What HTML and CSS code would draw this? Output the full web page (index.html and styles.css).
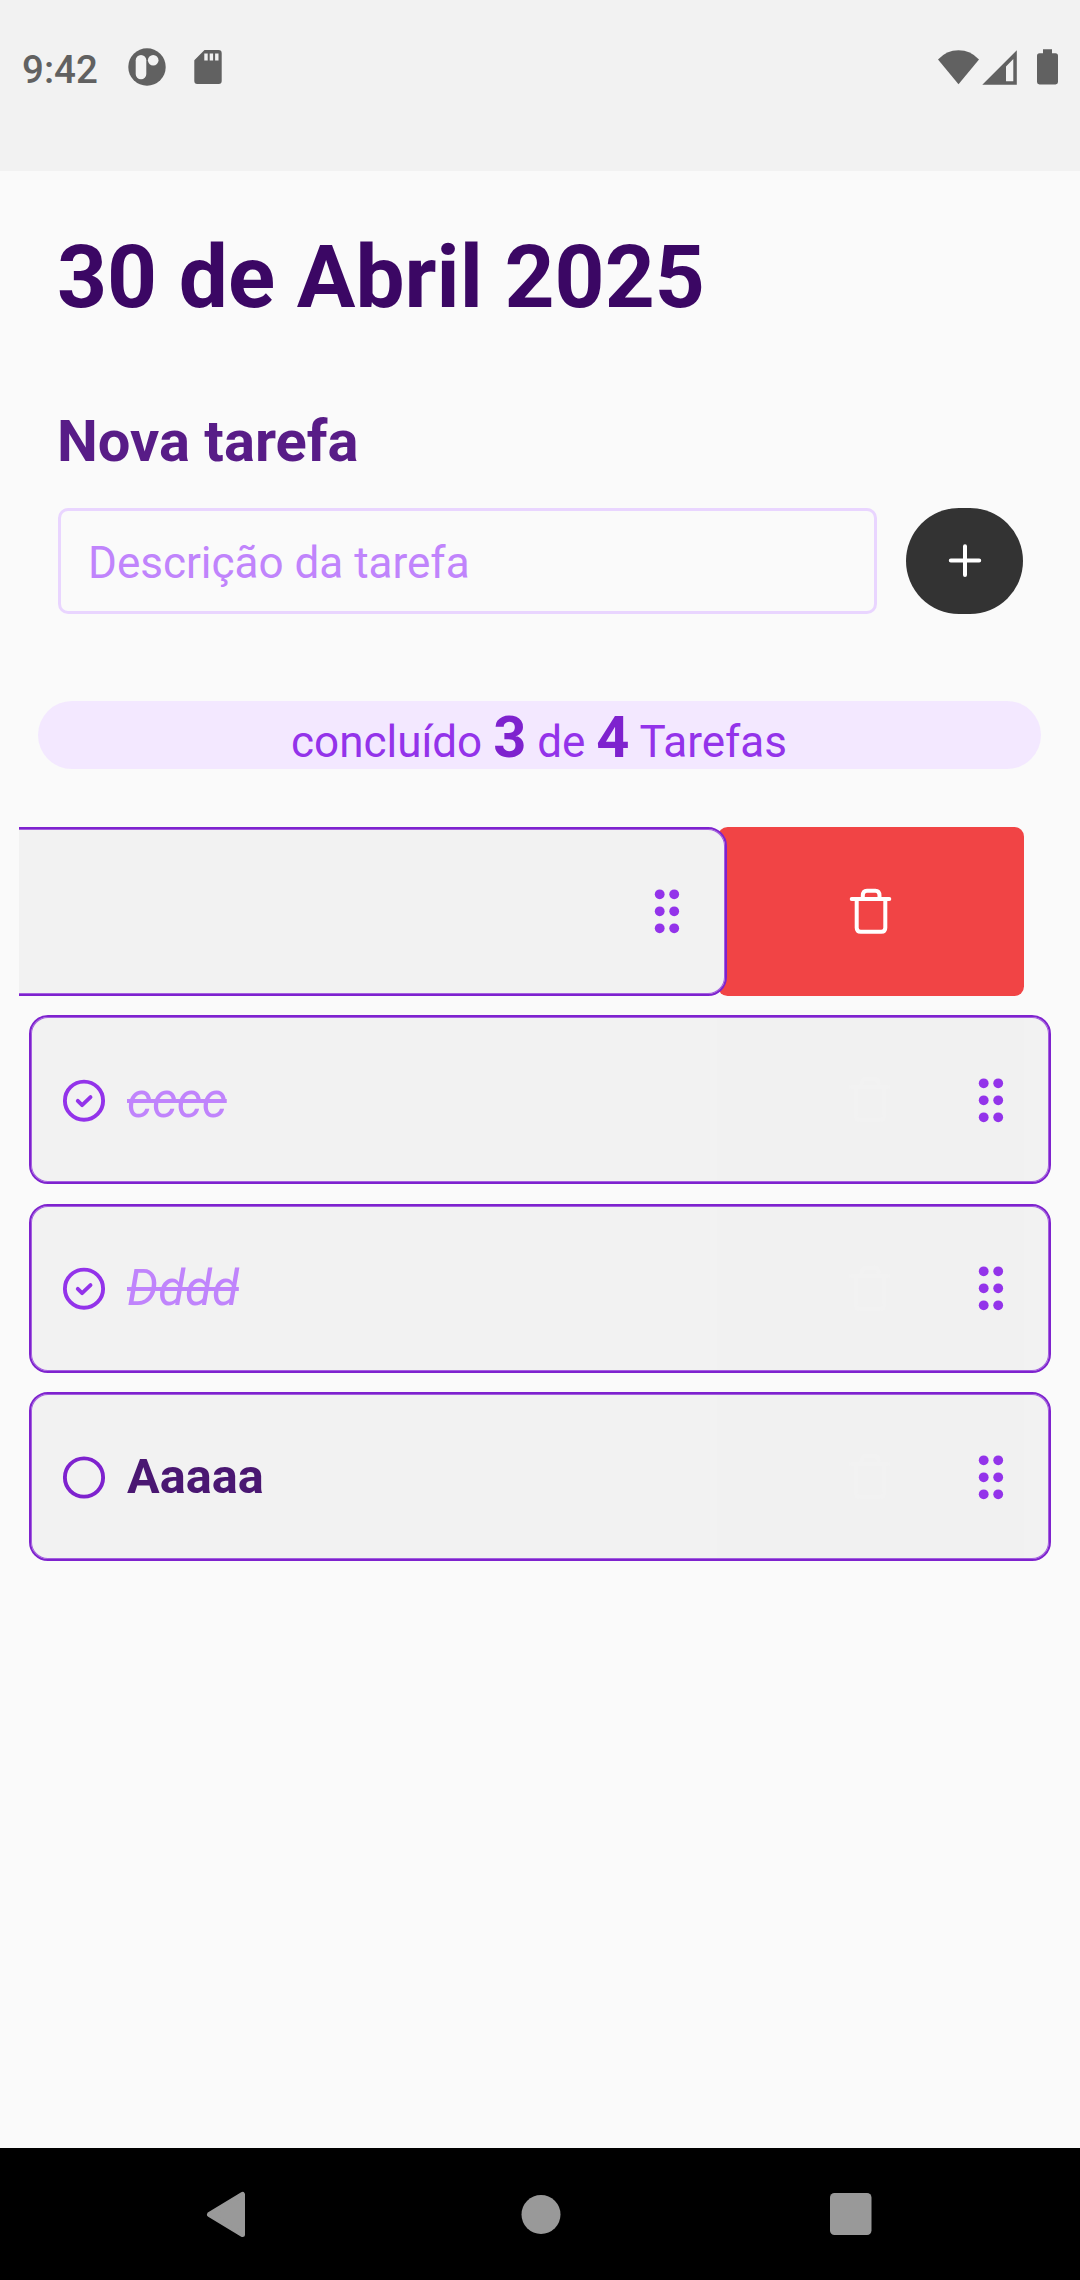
FILE: index.html
```html
<!DOCTYPE html>
<html lang="pt-BR">
<head>
<meta charset="utf-8">
<title>Tarefas</title>
<link rel="stylesheet" href="styles.css">
</head>
<body>
<svg width="0" height="0" class="sprite" aria-hidden="true">
  <symbol id="grip" viewBox="0 0 30 48">
    <g fill="#9333ea"><circle cx="7.7" cy="7.3" r="4.9"/><circle cx="22.2" cy="7.3" r="4.9"/><circle cx="7.7" cy="24.3" r="4.9"/><circle cx="22.2" cy="24.3" r="4.9"/><circle cx="7.7" cy="41.3" r="4.9"/><circle cx="22.2" cy="41.3" r="4.9"/></g>
  </symbol>
  <symbol id="done" viewBox="0 0 44 44">
    <g fill="none" stroke="#9333ea" stroke-width="3.9" stroke-linecap="round" stroke-linejoin="round"><circle cx="22" cy="22.7" r="19.1"/><path d="M15.8 22.8l4.3 4.3 8.4-8"/></g>
  </symbol>
  <symbol id="open" viewBox="0 0 44 44">
    <circle cx="22" cy="22.5" r="19.1" fill="none" stroke="#7e22ce" stroke-width="3.9"/>
  </symbol>
  <symbol id="trash" viewBox="0 0 48 48">
    <path fill="none" stroke="currentColor" stroke-width="4" stroke-linecap="round" stroke-linejoin="round" d="M4.7 12H42.3M9.7 12V40.8Q9.7 44.800 13.7 44.800H34.3Q38.3 44.800 38.3 40.800V12M15.8 12V8.8Q15.8 3.800 20 3.800H28.3Q32.5 3.800 32.5 8.800V12"/>
  </symbol>
</svg>
<header class="status">
  <span class="clock">9:42</span>
  <svg class="app" width="38" height="38" viewBox="0 0 38 38"><circle cx="19" cy="19" r="18.7" fill="#616161"/><rect x="7.7" y="7" width="10.6" height="24.2" rx="5.3" fill="#f2f2f2"/><circle cx="25.2" cy="12.2" r="5.3" fill="#f2f2f2"/></svg>
  <svg class="sd" width="28" height="34" viewBox="0 0 28 34"><path fill="#616161" fill-rule="evenodd" d="M10.5 0H24.5Q27.7 0 27.7 3.2V31Q27.7 34 24.7 34H3.3Q.3 34 .3 31V10.2ZM10.3 3.4V10.6H13.7V3.4ZM15.7 3.4V10.6H19.1V3.4ZM21.1 3.4V10.6H24.5V3.4Z"/></svg>
  <svg class="signals" width="122" height="36" viewBox="0 0 122 36"><g fill="#616161"><path d="M0 10.5Q8.5 1.3 20.5 1.3T41 10.5L20.5 35.3Z"/><path fill-rule="evenodd" d="M44.3 35.7L78.8 1.3V35.7ZM68 17.4V32.2H75.3V10Z"/><path d="M105 .3H114V4.2H117.5Q120 4.2 120 6.7V33Q120 35.4 117.5 35.4H101.5Q99 35.4 99 33V6.7Q99 4.2 101.5 4.2H105Z"/></g></svg>
</header>
<main class="screen">
  <h1 class="date">30 de Abril 2025</h1>
  <h2 class="subtitle">Nova tarefa</h2>
  <form class="new-task">
    <div class="field">Descrição da tarefa</div>
    <button class="add" type="button" aria-label="Adicionar"><svg width="36" height="36" viewBox="0 0 36 36"><path d="M18 3.300V32M3.800 17.500H32.200" stroke="#fff" stroke-width="4" stroke-linecap="round"/></svg></button>
  </form>
  <p class="summary"><span>concluído <b>3</b> de <b>4</b> Tarefas</span></p>
  <ul class="tasks">
    <li class="swipe">
      <div class="card swiped"><svg class="grip"><use href="#grip"/></svg></div>
      <div class="delete"><svg width="48" height="48"><use href="#trash"/></svg></div>
    </li>
    <li class="card"><svg class="under"><use href="#trash"/></svg><svg class="check"><use href="#done"/></svg><span class="label finished">cccc</span><svg class="grip"><use href="#grip"/></svg></li>
    <li class="card"><svg class="under"><use href="#trash"/></svg><svg class="check"><use href="#done"/></svg><span class="label finished">Dddd</span><svg class="grip"><use href="#grip"/></svg></li>
    <li class="card"><svg class="under"><use href="#trash"/></svg><svg class="check"><use href="#open"/></svg><span class="label">Aaaaa</span><svg class="grip"><use href="#grip"/></svg></li>
  </ul>
</main>
<nav class="navbar">
  <svg width="42" height="48" viewBox="0 0 42 48"><path d="M37.500 4.500V44.500L4.500 24.500Z" fill="#999" stroke="#999" stroke-width="5" stroke-linejoin="round"/></svg>
  <svg width="42" height="42" viewBox="0 0 42 42"><circle cx="21" cy="21.500" r="19.500" fill="#999"/></svg>
  <svg width="42" height="42" viewBox="0 0 42 42"><rect width="41.500" height="42" rx="4.500" fill="#999"/></svg>
</nav>
</body>
</html>
```
FILE: styles.css
```css
* { box-sizing: border-box; }
body {
  margin: 0;
  width: 1080px;
  height: 2280px;
  display: flex;
  flex-direction: column;
  overflow: hidden;
  background: #fafafa;
  font-family: Roboto, "Liberation Sans", sans-serif;
}
svg { display: block; flex: none; }
.sprite { display: none; }
h1, h2, p, ul { margin: 0; padding: 0; }
.status {
  height: 171px;
  display: flex;
  align-items: flex-start;
  padding: 48px 20px 0 22px;
  background: #f2f2f2;
}
.clock {
  width: 106px;
  font-size: 38.5px;
  font-weight: 500;
  line-height: 44px;
  color: #616161;
}
.app { margin-right: 28px; }
.sd { margin-top: 2px; }
.signals { margin: 1px 0 0 auto; }
.screen { flex: 1; padding-top: 58px; }
.date {
  padding-left: 57px;
  font-size: 87.3px;
  line-height: 96px;
  font-weight: 700;
  color: #3b0764;
}
.subtitle {
  margin-top: 77.5px;
  padding-left: 57px;
  font-size: 57.9px;
  line-height: 77px;
  font-weight: 700;
  color: #581c87;
}
.new-task {
  display: flex;
  gap: 29px;
  margin-top: 28.5px;
  padding: 0 57px 0 58px;
}
.field {
  flex: 1;
  height: 106px;
  padding: 2px 27px 0;
  border: 3px solid #e9d5ff;
  border-radius: 10px;
  font-size: 44px;
  line-height: 100px;
  color: #c084fc;
}
.add {
  width: 117px;
  height: 106px;
  display: flex;
  align-items: center;
  justify-content: center;
  padding: 0;
  border: 0;
  border-radius: 53px;
  background: #333;
}
.summary {
  height: 68px;
  margin: 87px 39px 0 38px;
  padding: 7px 1px 0 0;
  border-radius: 34px;
  background: #f3e8ff;
  font-size: 44px;
  line-height: 68px;
  text-align: center;
  color: #9333ea;
}
.summary b { font-size: 57.75px; line-height: 1; color: #7e22ce; }
.tasks {
  display: flex;
  flex-direction: column;
  gap: 19.5px;
  margin-top: 57.75px;
  padding: 0 29px;
  list-style: none;
}
.card {
  position: relative;
  height: 169px;
  display: flex;
  align-items: center;
  padding: 0 43px 0 31px;
  border: 2px solid #7e22ce;
  border-radius: 19px;
  background: #f2f2f2;
  box-shadow: inset 0 0 0 1px #a45fdf;
}
.tasks > .card {
  background: linear-gradient(90deg, #f2f2f2 0 686px, #f1f1f1 686px 993px, #f2f2f2 993px);
}
.swipe {
  display: flex;
  justify-content: flex-end;
  margin: 0 -2px 0 -10px;
  padding-right: 29px;
  overflow: hidden;
}
.swiped { flex: 0 0 1022px; margin-right: -9px; z-index: 1; }
.delete {
  flex: 0 0 306px;
  height: 169px;
  display: flex;
  align-items: center;
  justify-content: center;
  border-radius: 9.6px;
  background: #f14445;
  color: #fff;
}
/* delete icon showing faintly through a closed card */
.under {
  position: absolute;
  top: 58px;
  left: 815px;
  width: 48px;
  height: 48px;
  color: #f2f2f2;
}
.check { width: 44px; height: 44px; }
.label {
  margin-left: 21px;
  font-size: 48.6px;
  line-height: 68px;
  font-weight: 700;
  color: #4a1772;
}
.finished { font-size: 49.1px; font-weight: 400; font-style: italic; text-decoration: line-through; color: #c084fc; }
.grip { width: 30px; height: 48px; margin-left: auto; }
.navbar {
  height: 132px;
  display: flex;
  align-items: center;
  justify-content: space-between;
  padding: 0 208px 0 205px;
  background: #000;
}
.navbar svg:nth-child(2) { margin-left: 4px; }
```
